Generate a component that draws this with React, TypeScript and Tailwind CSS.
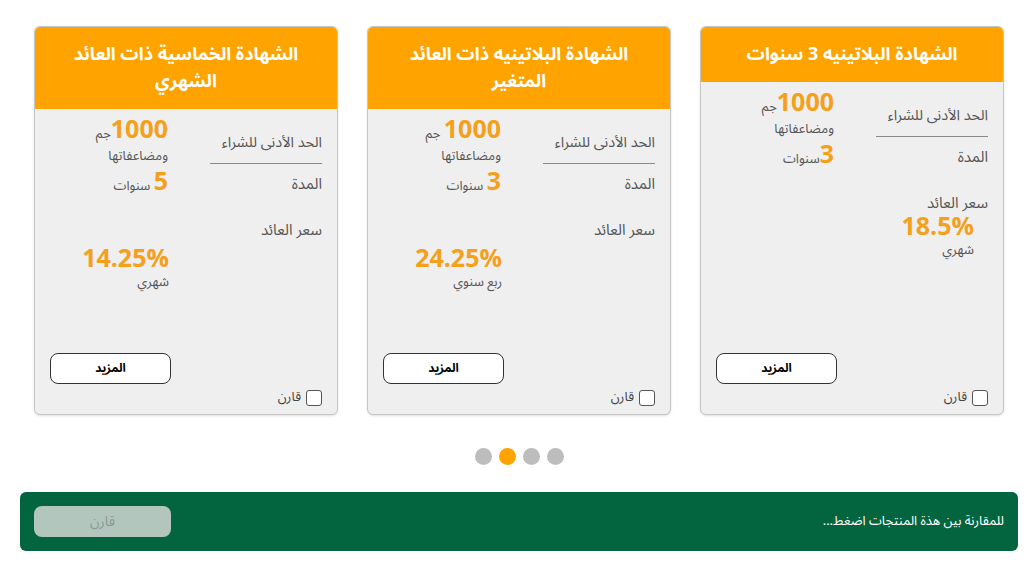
import React from 'react'

type Card = {
  title: string
  amount: string
  duration: React.ReactNode
  rate: string
  period: string
  rateSide: 'label' | 'value'
}

const cards: Card[] = [
  {
    title: 'الشهادة البلاتينيه 3 سنوات',
    amount: 'جم',
    duration: (
      <>
        <span className="text-[25px] font-bold text-[#f5a01a]">3</span>
        <span>سنوات</span>
      </>
    ),
    rate: '18.5%',
    period: 'شهري',
    rateSide: 'label',
  },
  {
    title: 'الشهادة البلاتينيه ذات العائد المتغير',
    amount: ' جم',
    duration: (
      <>
        <span className="text-[25px] font-bold text-[#f5a01a]">3</span>
        <span> سنوات</span>
      </>
    ),
    rate: '24.25%',
    period: 'ربع سنوي',
    rateSide: 'value',
  },
  {
    title: 'الشهادة الخماسية ذات العائد الشهري',
    amount: 'جم',
    duration: (
      <>
        <span className="text-[25px] font-bold text-[#f5a01a]">5</span>
        <span> سنوات</span>
      </>
    ),
    rate: '14.25%',
    period: 'شهري',
    rateSide: 'value',
  },
]

function ProductCard({ card }: { card: Card }) {
  return (
    <div className="w-[304px] h-[389px] shrink-0 flex flex-col rounded-md border border-[#c6c6c6] bg-[#efefef] overflow-hidden shadow-sm">
      <div className="bg-[#ffa300] px-[26px] py-[14px] text-center text-white text-[18px] font-bold leading-[27px]">
        {card.title}
      </div>

      <div className="flex flex-col px-[15px] pt-[7px]">
        <div className="grid grid-cols-[112px_1fr] gap-x-[42px]">
          {/* row 1 */}
          <div className="flex items-end pb-[10px] border-b border-[#8a8a8a] text-[14.5px] leading-[20px] text-[#555] whitespace-nowrap">
            الحد الأدنى للشراء
          </div>
          <div className="flex flex-col text-[#555]">
            <div className="leading-[28px] whitespace-nowrap">
              <span className="text-[25px] font-bold text-[#f5a01a]">1000</span>
              <span className="text-[13px]">{card.amount}</span>
            </div>
            <div className="text-[13px] leading-[16px]">ومضاعفاتها</div>
          </div>

          {/* row 2 */}
          <div className="h-[40px] flex items-center text-[15px] text-[#555]">المدة</div>
          <div className="h-[40px] flex items-center text-[13px] text-[#555]">
            <div className="leading-[28px]">{card.duration}</div>
          </div>

          {/* row 3 */}
          <div className="mt-[16px] text-[15px] leading-[20px] text-[#555]">سعر العائد</div>
          <div />
        </div>

        <div
          className={
            card.rateSide === 'label'
              ? 'flex flex-col items-start mr-[14px] mt-[3px]'
              : 'flex flex-col items-start mr-[153px] mt-[8px]'
          }
        >
          <div className="text-[25px] font-bold leading-[23px] text-[#f5a01a]" dir="ltr">
            {card.rate}
          </div>
          <div className="mt-[3px] text-[13px] leading-[16px] text-[#555]">{card.period}</div>
        </div>
      </div>

      <div className="mt-auto flex flex-col px-[15px] pb-[8px]">
        <div className="flex justify-end">
          <button className="w-[121px] h-[31px] rounded-lg border border-[#333] bg-white text-[12px] font-bold text-black">
            المزيد
          </button>
        </div>
        <label className="mt-[6px] flex items-center gap-[5px] h-[16px] text-[13px] text-[#444]">
          <span className="w-[16px] h-[16px] rounded-[3px] border border-[#555] bg-white" />
          قارن
        </label>
      </div>
    </div>
  )
}

export default function App() {
  return (
    <div
      dir="rtl"
      className="w-[1024px] h-[563px] bg-white overflow-hidden font-['Noto_Sans_Arabic','Noto_Sans','DejaVu_Sans',sans-serif]"
    >
      <div className="flex gap-[29px] pt-[26px] pr-[20px]">
        {cards.map((c) => (
          <ProductCard key={c.title} card={c} />
        ))}
      </div>

      <div className="flex justify-center gap-[7px] mt-[33px] pl-[15px]" dir="ltr">
        <span className="w-[17px] h-[17px] rounded-full bg-[#bdbdbd]" />
        <span className="w-[17px] h-[17px] rounded-full bg-[#ffa300]" />
        <span className="w-[17px] h-[17px] rounded-full bg-[#bdbdbd]" />
        <span className="w-[17px] h-[17px] rounded-full bg-[#bdbdbd]" />
      </div>

      <div className="mt-[27px] ml-[20px] mr-[6px] h-[59px] rounded-md bg-[#03653f] flex items-center justify-between px-[14px]">
        <span className="text-[13px] text-white">للمقارنة بين هذة المنتجات اضغط...</span>
        <button className="w-[137px] h-[31px] rounded-lg bg-[#b3c6be] text-[14px] text-[#8b9a93]">
          قارن
        </button>
      </div>
    </div>
  )
}
